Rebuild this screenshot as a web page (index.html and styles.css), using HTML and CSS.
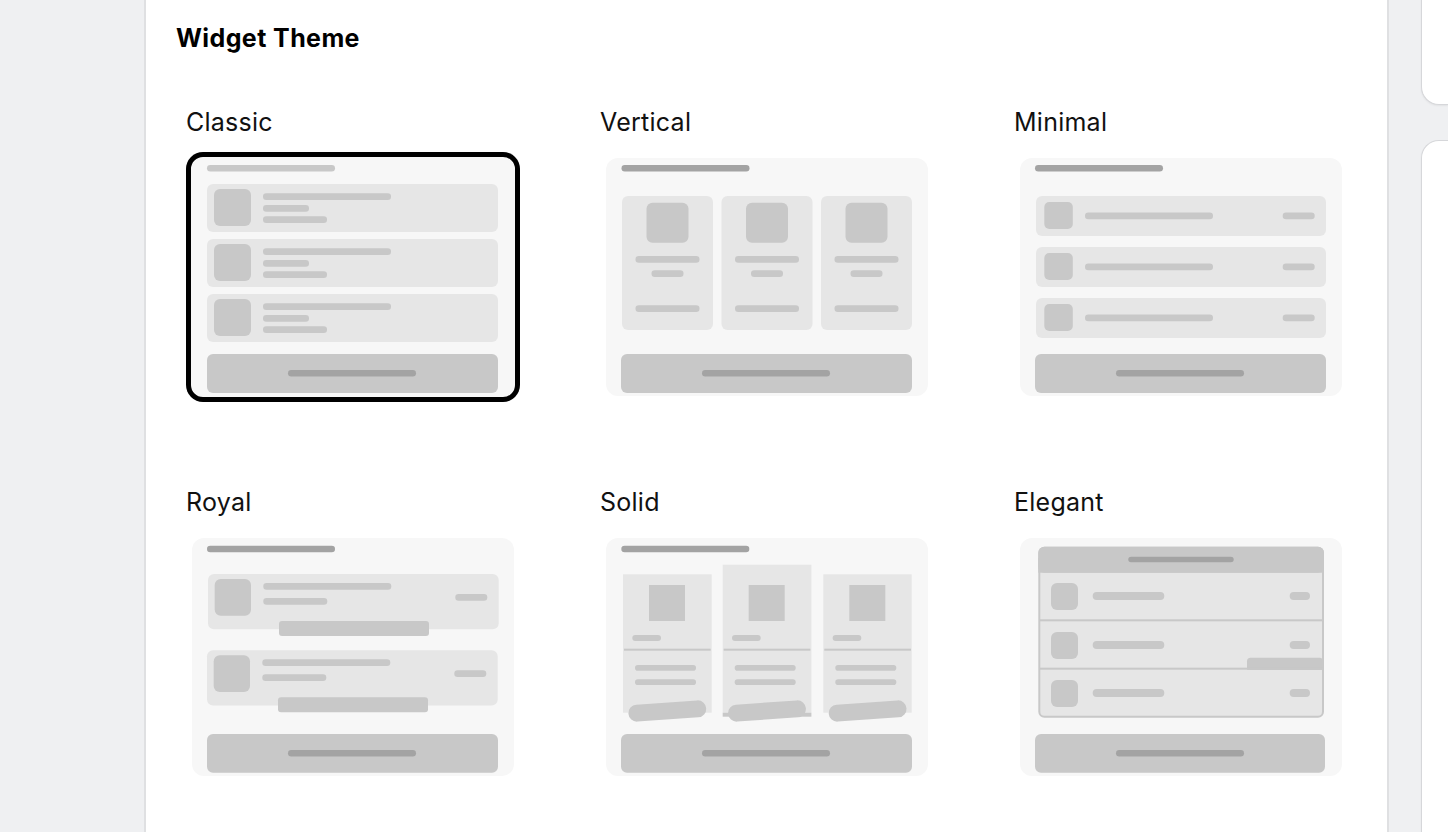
FILE: index.html
```html
<!DOCTYPE html>
<html lang="en">
<head>
<meta charset="utf-8">
<title>Widget Theme</title>
<link rel="stylesheet" href="styles.css">
</head>
<body>
<div class="layout">
  <div class="gutter"></div>
  <main class="card">
    <h2 class="title">Widget Theme</h2>
    <div class="themes">

      <div class="theme">
        <div class="theme-name">Classic</div>
        <div class="thumb selected">
          <svg viewBox="0 0 322 238" aria-hidden="true">
            <defs>
              <g id="classic-row">
                <rect class="row" x="15" y="26" width="291" height="48" rx="6"/>
                <rect class="sh" x="22" y="31" width="37" height="37" rx="6"/>
                <rect class="sh" x="71" y="35.3" width="128" height="6.7" rx="3.3"/>
                <rect class="sh" x="71" y="47" width="46" height="6.7" rx="3.3"/>
                <rect class="sh" x="71" y="58.3" width="64" height="6.7" rx="3.3"/>
              </g>
            </defs>
            <rect class="bg" width="322" height="238" rx="12"/>
            <rect class="sh" x="15" y="7" width="128" height="6.5" rx="3.25"/>
            <use href="#classic-row"/>
            <use href="#classic-row" transform="translate(0 55)"/>
            <use href="#classic-row" transform="translate(0 110)"/>
            <rect class="sh" x="15" y="196" width="291" height="39" rx="6"/>
            <rect class="dk" x="96" y="212" width="128" height="6.5" rx="3.25"/>
          </svg>
        </div>
      </div>

      <div class="theme">
        <div class="theme-name">Vertical</div>
        <div class="thumb">
          <svg viewBox="0 0 322 238" aria-hidden="true">
            <defs>
              <g id="vertical-col">
                <rect class="row" x="0" y="38" width="91" height="134" rx="6"/>
                <rect class="sh" x="24.5" y="44.7" width="42" height="40" rx="6"/>
                <rect class="sh" x="13.5" y="98" width="64" height="6.7" rx="3.3"/>
                <rect class="sh" x="29.5" y="112.3" width="32" height="6.7" rx="3.3"/>
                <rect class="sh" x="13.5" y="147.3" width="64" height="6.7" rx="3.3"/>
              </g>
            </defs>
            <rect class="bg" width="322" height="238" rx="12"/>
            <rect class="dk" x="15.5" y="7" width="128" height="6.5" rx="3.25"/>
            <use href="#vertical-col" transform="translate(16 0)"/>
            <use href="#vertical-col" transform="translate(115.5 0)"/>
            <use href="#vertical-col" transform="translate(215 0)"/>
            <rect class="sh" x="15" y="196" width="291" height="39" rx="6"/>
            <rect class="dk" x="96" y="212" width="128" height="6.5" rx="3.25"/>
          </svg>
        </div>
      </div>

      <div class="theme">
        <div class="theme-name">Minimal</div>
        <div class="thumb">
          <svg viewBox="0 0 322 238" aria-hidden="true">
            <defs>
              <g id="minimal-row">
                <rect class="row" x="16" y="38" width="290" height="40" rx="6"/>
                <rect class="sh" x="24.3" y="44" width="28.5" height="27" rx="5"/>
                <rect class="sh" x="65" y="54.5" width="128" height="6.7" rx="3.3"/>
                <rect class="sh" x="262.7" y="54.5" width="32" height="6.7" rx="3.3"/>
              </g>
            </defs>
            <rect class="bg" width="322" height="238" rx="12"/>
            <rect class="dk" x="15" y="7" width="128" height="6.5" rx="3.25"/>
            <use href="#minimal-row"/>
            <use href="#minimal-row" transform="translate(0 51)"/>
            <use href="#minimal-row" transform="translate(0 102)"/>
            <rect class="sh" x="15" y="196" width="291" height="39" rx="6"/>
            <rect class="dk" x="96" y="212" width="128" height="6.5" rx="3.25"/>
          </svg>
        </div>
      </div>

      <div class="theme">
        <div class="theme-name">Royal</div>
        <div class="thumb">
          <svg viewBox="0 0 322 238" aria-hidden="true">
            <defs>
              <g id="royal-row">
                <rect class="row" x="0" y="0" width="290.7" height="55.3" rx="6"/>
                <rect class="sh" x="6.7" y="5" width="36.3" height="36.7" rx="6"/>
                <rect class="sh" x="55.3" y="9" width="128" height="6.7" rx="3.3"/>
                <rect class="sh" x="55.3" y="24" width="64" height="6.7" rx="3.3"/>
                <rect class="sh" x="247.3" y="20" width="32" height="6.7" rx="3.3"/>
                <rect class="sh" x="71" y="47" width="150" height="15" rx="3"/>
              </g>
            </defs>
            <rect class="bg" width="322" height="238" rx="12"/>
            <rect class="dk" x="15" y="7.7" width="128" height="6.5" rx="3.25"/>
            <use href="#royal-row" transform="translate(16 36)"/>
            <use href="#royal-row" transform="translate(15 112.3)"/>
            <rect class="sh" x="15" y="196" width="291" height="38.7" rx="6"/>
            <rect class="dk" x="96" y="212" width="128" height="6.5" rx="3.25"/>
          </svg>
        </div>
      </div>

      <div class="theme">
        <div class="theme-name">Solid</div>
        <div class="thumb">
          <svg viewBox="0 0 322 238" aria-hidden="true">
            <defs>
              <g id="solid-col">
                <rect class="sh" x="26" y="47" width="36" height="36"/>
                <rect class="sh" x="9.3" y="97" width="28.7" height="6" rx="3"/>
                <rect class="sh" x="1" y="110.7" width="86.7" height="2"/>
                <rect class="sh" x="12" y="127" width="61" height="5.7" rx="2.8"/>
                <rect class="sh" x="12" y="141.3" width="61" height="5.7" rx="2.8"/>
                <rect class="sh" x="-39" y="-8.5" width="78" height="17" rx="8.5" transform="translate(44.3 173) rotate(-4)"/>
              </g>
            </defs>
            <rect class="bg" width="322" height="238" rx="12"/>
            <rect class="dk" x="15.3" y="7.7" width="128" height="6.5" rx="3.25"/>
            <rect class="row" x="17" y="36.3" width="88.7" height="138.4"/>
            <rect class="row" x="116.7" y="26.7" width="88.7" height="148"/>
            <rect class="sh" x="116.7" y="174.7" width="88.7" height="4"/>
            <rect class="row" x="217.3" y="36.3" width="88.4" height="138.4"/>
            <use href="#solid-col" transform="translate(17 0)"/>
            <use href="#solid-col" transform="translate(116.7 0)"/>
            <use href="#solid-col" transform="translate(217.3 0)"/>
            <rect class="sh" x="15" y="196" width="291" height="38.7" rx="6"/>
            <rect class="dk" x="96" y="212" width="128" height="6.5" rx="3.25"/>
          </svg>
        </div>
      </div>

      <div class="theme">
        <div class="theme-name">Elegant</div>
        <div class="thumb">
          <svg viewBox="0 0 322 238" aria-hidden="true">
            <defs>
              <g id="elegant-row">
                <rect class="sh" x="31" y="0" width="27" height="27" rx="6"/>
                <rect class="sh" x="72.7" y="9" width="71.6" height="8" rx="4"/>
                <rect class="sh" x="269.7" y="9" width="20.3" height="8" rx="4"/>
              </g>
            </defs>
            <rect class="bg" width="322" height="238" rx="12"/>
            <rect class="row line" x="19.3" y="9.7" width="283.7" height="169" rx="5"/>
            <rect class="sh" x="18.3" y="8.7" width="285.7" height="26" rx="6"/>
            <rect class="sh" x="18.3" y="20" width="285.7" height="14.7"/>
            <rect class="dk" x="108.3" y="18.7" width="105.4" height="5.6" rx="2.8"/>
            <rect class="sh" x="227" y="119.7" width="76" height="12" rx="3.5"/>
            <rect class="sh" x="227" y="124" width="76" height="7.7"/>
            <rect class="sh" x="19.3" y="81.3" width="283.7" height="2"/>
            <rect class="sh" x="19.3" y="129.7" width="283.7" height="2"/>
            <use href="#elegant-row" transform="translate(0 45)"/>
            <use href="#elegant-row" transform="translate(0 94)"/>
            <use href="#elegant-row" transform="translate(0 142)"/>
            <rect class="sh" x="15" y="196" width="290" height="38.7" rx="6"/>
            <rect class="dk" x="96" y="212" width="128" height="6.5" rx="3.25"/>
          </svg>
        </div>
      </div>

    </div>
  </main>
  <aside class="side">
    <div class="panel panel-top"></div>
    <div class="panel panel-bottom"></div>
  </aside>
</div>
</body>
</html>
```
FILE: styles.css
```css
html, body {
  margin: 0;
  height: 100%;
  overflow: hidden;
}

body {
  background: #eff0f2;
  font-family: Inter, "Noto Sans", sans-serif;
  color: #000;
}

.layout {
  display: flex;
  height: 100%;
}

.gutter {
  width: 144px;
  flex: none;
}

.card {
  width: 1245px;
  flex: none;
  box-sizing: border-box;
  background: #fff;
  border-left: 2px solid #dfe0e2;
  border-right: 2px solid #dfe0e2;
  padding: 24px 0 0 30px;
}

.title {
  margin: 0;
  font-size: 25px;
  line-height: 29px;
  font-weight: 700;
  letter-spacing: 0.4px;
  color: #000;
}

.themes {
  display: grid;
  grid-template-columns: repeat(3, 334px);
  column-gap: 80px;
  row-gap: 85px;
  margin: 54px 0 0 10px;
}

.theme-name {
  font-size: 25px;
  line-height: 30px;
  font-weight: 400;
  letter-spacing: 0.25px;
  color: #111;
  margin-bottom: 15px;
}

.thumb {
  padding: 6px;
  border-radius: 17px;
  line-height: 0;
}

.thumb svg {
  display: block;
  width: 322px;
  height: 238px;
}

.thumb.selected {
  background: #f7f7f7;
  box-shadow: inset 0 0 0 5px #000;
}

.bg { fill: #f7f7f7; }
.row { fill: #e6e6e6; }
.sh { fill: #c8c8c8; }
.dk { fill: #a3a3a3; }
.line { stroke: #c8c8c8; stroke-width: 2; }

.side {
  flex: 1;
  margin-left: 32px;
  display: flex;
  flex-direction: column;
  gap: 35px;
  min-width: 0;
}

.panel {
  background: #fff;
  border: 1px solid #d6d7da;
  border-right: none;
  border-radius: 18px 0 0 18px;
  box-shadow: 0 1px 2px rgba(0, 0, 0, 0.06);
  box-sizing: border-box;
}

.panel-top {
  margin-top: -60px;
  height: 165px;
  flex: none;
}

.panel-bottom {
  flex: 1;
  margin-bottom: -40px;
}
```
